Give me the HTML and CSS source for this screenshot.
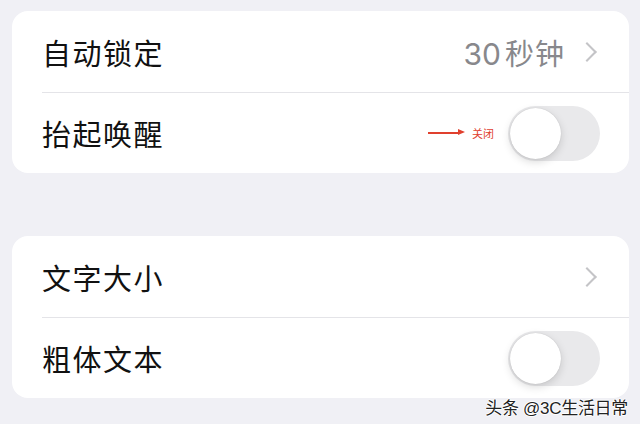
FILE: index.html
```html
<!DOCTYPE html>
<html lang='zh-CN'>
<head>
    <meta charset='UTF-8'>
    <meta name='viewport' content='width=device-width, initial-scale=1.0'>
    <title>显示与亮度</title>
    <link rel="stylesheet" href="styles.css">
</head>
<body>
<div class='page'>
    <div class='group'>
        <div class='cell'>
            <span class='label'>自动锁定</span>
            <span class='value'><span class='num'>30</span>秒钟</span>
            <span class='chevron'></span>
        </div>
        <div class='cell'>
            <span class='label'>抬起唤醒</span>
            <span class='note'><i class='arrow'></i>关闭</span>
            <label class='switch'><input type='checkbox'><span></span></label>
        </div>
    </div>
    <div class='group'>
        <div class='cell'>
            <span class='label'>文字大小</span>
            <span class='chevron'></span>
        </div>
        <div class='cell'>
            <span class='label'>粗体文本</span>
            <label class='switch'><input type='checkbox'><span></span></label>
        </div>
    </div>
</div>
<div class='watermark'>头条 @3C生活日常</div>
</body>
</html>
```

FILE: styles.css
```css
html, body {
    margin: 0;
    background: #f0f0f5;
    font-family: 'Noto Sans CJK SC', 'Noto Sans', sans-serif;
}

.page {
    padding: 11px 11px 0 12px;
    display: flex;
    flex-direction: column;
    gap: 63px;
}

.group {
    background: #ffffff;
    border-radius: 16px;
    overflow: hidden;
}

.cell {
    height: 81px;
    display: flex;
    align-items: center;
    padding: 0 29px 0 30px;
    position: relative;
}

.cell + .cell {
    border-top: 1px solid #e4e4e8;
    height: 80px;
    margin-left: 30px;
    padding-left: 0;
}

.label {
    flex: 1;
    font-size: 29px;
    color: #111;
    letter-spacing: 1.5px;
}

.value {
    font-size: 29px;
    color: #88888c;
    margin-right: 15px;
    letter-spacing: 1px;
}

.value .num {
    font-family: 'Inter', 'Noto Sans', sans-serif;
    font-size: 30px;
    letter-spacing: 0;
    margin-right: 4px;
}

.chevron {
    width: 12px;
    height: 12px;
    border-top: 2.5px solid #c4c4c7;
    border-right: 2.5px solid #c4c4c7;
    transform: rotate(45deg);
    margin-right: 6px;
}

.note {
    display: flex;
    align-items: center;
    font-size: 11px;
    color: #e0402e;
    margin-right: 14px;
}

.arrow {
    display: inline-block;
    width: 32px;
    height: 1.5px;
    background: #e0402e;
    margin-right: 12px;
    position: relative;
}

.arrow::after {
    content: '';
    position: absolute;
    right: -5px;
    top: -3px;
    border-left: 7px solid #e0402e;
    border-top: 3.5px solid transparent;
    border-bottom: 3.5px solid transparent;
}

.switch input {
    display: none;
}

.switch span {
    display: block;
    width: 92px;
    height: 55px;
    border-radius: 28px;
    background: #e9e9eb;
    position: relative;
}

.switch span::before {
    content: '';
    position: absolute;
    left: 2px;
    top: 2px;
    width: 51px;
    height: 51px;
    border-radius: 50%;
    background: #fff;
    box-shadow: 0 3px 8px rgba(0, 0, 0, 0.15), 0 0 1px rgba(0, 0, 0, 0.2);
}

.watermark {
    position: absolute;
    right: 12px;
    top: 394px;
    font-family: 'Liberation Sans', 'Noto Sans CJK SC', sans-serif;
    font-size: 17px;
    letter-spacing: -0.3px;
    color: #222;
    text-shadow: 1px 0 0 #fff, -1px 0 0 #fff, 0 1px 0 #fff, 0 -1px 0 #fff;
}
```
